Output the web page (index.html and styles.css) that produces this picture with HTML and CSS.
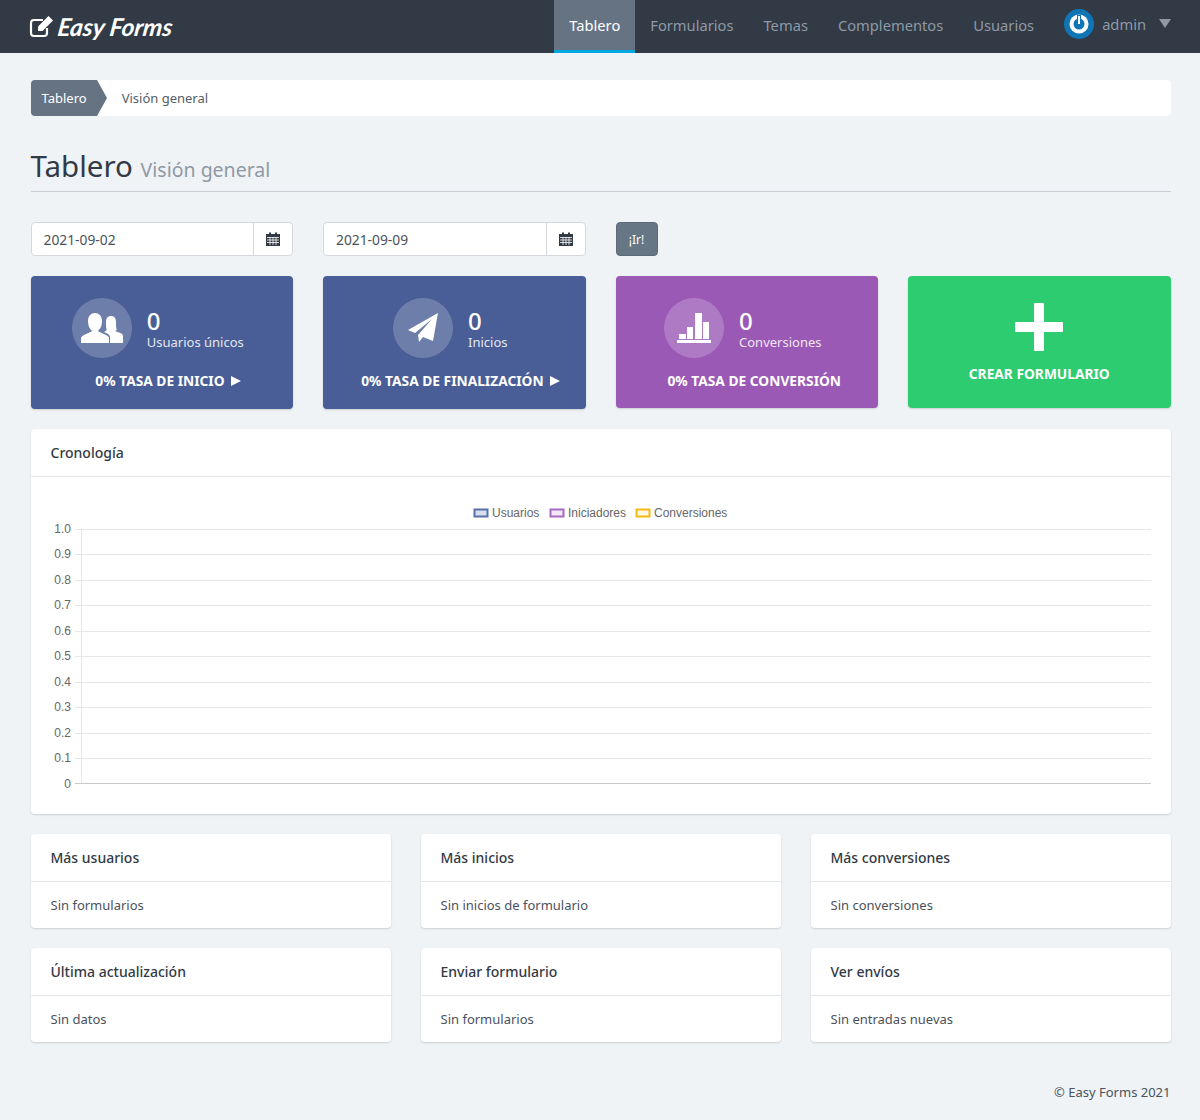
FILE: index.html
```html
<!DOCTYPE html>
<html lang="es">
<head>
  <meta charset="UTF-8">
  <title>Tablero - Easy Forms</title>
  <link rel="stylesheet" href="styles.css">
</head>
<body>

  <nav class="navbar">
    <a class="brand">
      <svg class="brand-icon" viewBox="0 0 24 24" width="24" height="24"><path d="M18 13v5a3 3 0 0 1-3 3H5a3 3 0 0 1-3-3V8a3 3 0 0 1 3-3h9" fill="none" stroke="#fff" stroke-width="2.2"/><path d="M9 11.5 19.5 1 24 5.5 13.500 16H9z" fill="#fff"/></svg>
      <span class="brand-text">Easy Forms</span>
    </a>
    <ul class="nav-links">
      <li class="active">Tablero</li>
      <li>Formularios</li>
      <li>Temas</li>
      <li>Complementos</li>
      <li>Usuarios</li>
      <li class="user">
        <svg class="avatar" viewBox="0 0 30 30" width="30" height="30"><circle cx="15" cy="15" r="15" fill="#0f75b5"/><circle cx="15" cy="15" r="9.500" fill="#fff"/><circle cx="15" cy="15" r="5.500" fill="#0f75b5"/><rect x="13" y="6" width="4" height="10" fill="#0f75b5"/><rect x="14" y="7" width="2" height="8" fill="#fff"/></svg>
        <span>admin</span>
        <i class="caret"></i>
      </li>
    </ul>
  </nav>

  <main class="page">
    <div class="breadcrumb">
      <span class="crumb-first">Tablero</span>
      <span class="crumb-current">Visión general</span>
    </div>

    <h1 class="page-title">Tablero <small>Visión general</small></h1>

    <div class="four-cols filters">
      <div class="input-group">
        <span class="date-value">2021-09-02</span>
        <span class="addon">
          <svg class="calendar" viewBox="0 0 14 14" width="14" height="14"><path d="M0 2h14v12H0z" fill="#323a45"/><rect x="3" y="0.500" width="2" height="3" fill="#323a45"/><rect x="9" y="0.500" width="2" height="3" fill="#323a45"/><path d="M1 5.500h12M1 8h12M1 10.500h12M4 5v8M7 5v8M10 5v8" stroke="#fff" stroke-width="0.800"/></svg>
        </span>
      </div>
      <div class="input-group">
        <span class="date-value">2021-09-09</span>
        <span class="addon">
          <svg class="calendar" viewBox="0 0 14 14" width="14" height="14"><path d="M0 2h14v12H0z" fill="#323a45"/><rect x="3" y="0.500" width="2" height="3" fill="#323a45"/><rect x="9" y="0.500" width="2" height="3" fill="#323a45"/><path d="M1 5.500h12M1 8h12M1 10.500h12M4 5v8M7 5v8M10 5v8" stroke="#fff" stroke-width="0.800"/></svg>
        </span>
      </div>
      <div><button class="go-button">¡Ir!</button></div>
    </div>

    <div class="four-cols stats">
      <div class="stat stat-blue">
        <div class="stat-main">
          <span class="stat-icon">
            <svg viewBox="0 0 42 30" width="42" height="30"><path d="M0 30v-5c0-3 9-5 11-7-3-3-4-6-4-10 0-5 3-8 7-8s7 3 7 8c0 4-1 7-4 10 2 2 11 4 11 7v5z" fill="#fff"/><path d="M29 30v-6c0-2-3-4-6-5 1-1 2-1 3-2-1-1-1-4-1-8 0-4 2-6 5-6s5 2 5 6c0 4 0 7 1 8l-2 1c2 1 8 2 8 5v7z" fill="#fff"/></svg>
          </span>
          <div class="stat-text"><b>0</b><span>Usuarios únicos</span></div>
        </div>
        <div class="stat-foot">0% TASA DE INICIO <i class="arrow"></i></div>
      </div>
      <div class="stat stat-blue">
        <div class="stat-main">
          <span class="stat-icon">
            <svg viewBox="0 0 30 30" width="30" height="30"><path d="M30 0 25 28 15 24 11 29 10 22 24 6 7 20 0 17z" fill="#fff"/></svg>
          </span>
          <div class="stat-text"><b>0</b><span>Inicios</span></div>
        </div>
        <div class="stat-foot">0% TASA DE FINALIZACIÓN <i class="arrow"></i></div>
      </div>
      <div class="stat stat-purple">
        <div class="stat-main">
          <span class="stat-icon">
            <svg viewBox="0 0 34 30" width="34" height="30"><path d="M0 27h34v3H0z" fill="#fff"/><path d="M2 21h7v5H2zM10 14h6v12h-6zM18 0h7v26h-7zM26 9h6v17h-6z" fill="#fff"/></svg>
          </span>
          <div class="stat-text"><b>0</b><span>Conversiones</span></div>
        </div>
        <div class="stat-foot no-arrow">0% TASA DE CONVERSIÓN</div>
      </div>
      <div class="stat stat-green">
        <span class="plus"></span>
        <div class="create-label">CREAR FORMULARIO</div>
      </div>
    </div>

    <section class="panel timeline">
      <h3 class="panel-head">Cronología</h3>
      <svg class="chart" viewBox="0 0 1140 337" width="1140" height="337">
        <g class="legend">
          <rect x="443.500" y="32.500" width="13" height="7" fill="#d8deee" stroke="#5870ab" stroke-width="2"/>
          <text x="461" y="40">Usuarios</text>
          <rect x="519.500" y="32.500" width="13" height="7" fill="#f2e8f6" stroke="#a868c4" stroke-width="2"/>
          <text x="537" y="40">Iniciadores</text>
          <rect x="605.500" y="32.500" width="13" height="7" fill="#fff8e4" stroke="#f5b914" stroke-width="2"/>
          <text x="623" y="40">Conversiones</text>
        </g>
        <g class="grid">
          <path d="M44 52.500H1120M44 77.500H1120M44 103.500H1120M44 128.500H1120M44 154.500H1120M44 179.500H1120M44 205.500H1120M44 230.500H1120M44 256.500H1120M44 281.500H1120"/>
          <path d="M50.500 52V307"/>
        </g>
        <path class="axis" d="M44 306.500H1120"/>
        <g class="ticks">
          <text x="40" y="56">1.0</text>
          <text x="40" y="81">0.9</text>
          <text x="40" y="107">0.8</text>
          <text x="40" y="132">0.7</text>
          <text x="40" y="158">0.6</text>
          <text x="40" y="183">0.5</text>
          <text x="40" y="209">0.4</text>
          <text x="40" y="234">0.3</text>
          <text x="40" y="260">0.2</text>
          <text x="40" y="285">0.1</text>
          <text x="40" y="311">0</text>
        </g>
      </svg>
    </section>

    <div class="three-cols">
      <section class="panel"><h3 class="panel-head">Más usuarios</h3><p class="panel-body">Sin formularios</p></section>
      <section class="panel"><h3 class="panel-head">Más inicios</h3><p class="panel-body">Sin inicios de formulario</p></section>
      <section class="panel"><h3 class="panel-head">Más conversiones</h3><p class="panel-body">Sin conversiones</p></section>
      <section class="panel"><h3 class="panel-head">Última actualización</h3><p class="panel-body">Sin datos</p></section>
      <section class="panel"><h3 class="panel-head">Enviar formulario</h3><p class="panel-body">Sin formularios</p></section>
      <section class="panel"><h3 class="panel-head">Ver envíos</h3><p class="panel-body">Sin entradas nuevas</p></section>
    </div>

    <footer class="copyright">© Easy Forms 2021</footer>
  </main>

</body>
</html>
```

FILE: styles.css
```css
* { box-sizing: border-box; margin: 0; padding: 0; }

body {
  font-family: "Noto Sans", "Open Sans", sans-serif;
  font-size: 13px;
  color: #323a45;
  background-color: #eff3f6;
}

.navbar {
  display: flex;
  justify-content: space-between;
  height: 53px;
  padding: 0 14px 0 29px;
  background-color: #323a45;
}

.brand {
  display: flex;
  align-items: center;
  gap: 5px;
  color: #fff;
}

.brand-text {
  font-family: "Lato", sans-serif;
  font-size: 24.5px;
  font-weight: 700;
  font-style: italic;
  transform: skewX(-8deg);
}

.nav-links {
  display: flex;
  list-style: none;
}

.nav-links li {
  display: flex;
  align-items: center;
  padding: 0 15px 4px;
  font-size: 14.7px;
  color: #8f99a5;
}

.nav-links .active {
  color: #fff;
  background-color: #657383;
  border-bottom: 3px solid #00a8e1;
  padding-bottom: 1px;
}

.nav-links .user { gap: 8px; padding-bottom: 6px; }

.caret {
  margin-left: 5px;
  border-left: 6px solid transparent;
  border-right: 6px solid transparent;
  border-top: 9px solid #8f99a5;
}

.page {
  width: 1140px;
  margin-left: 30.5px;
  padding-top: 27px;
}

.breadcrumb {
  display: flex;
  align-items: center;
  height: 36px;
  background: #fff;
  border-radius: 4px;
}

.crumb-first {
  position: relative;
  display: flex;
  align-items: center;
  height: 36px;
  padding: 0 10px 0 11px;
  color: #fff;
  background: #657383;
  border-radius: 4px 0 0 4px;
}

.crumb-first::after {
  content: "";
  position: absolute;
  left: 100%;
  top: 0;
  border-left: 10px solid #657383;
  border-top: 18px solid transparent;
  border-bottom: 18px solid transparent;
}

.crumb-current {
  margin-left: 25px;
  color: #555d68;
}

.page-title {
  margin-top: 29px;
  height: 47px;
  font-size: 29.5px;
  font-weight: 400;
  line-height: 41px;
  border-bottom: 1px solid #c9ced4;
}

.page-title small {
  font-size: 19.5px;
  color: #8f99a5;
}

.four-cols {
  display: grid;
  grid-template-columns: repeat(4, 1fr);
  gap: 30px;
}

.filters { margin-top: 30px; }

.input-group {
  display: flex;
  height: 34px;
  background: #fff;
  border: 1px solid #d5d9de;
  border-radius: 4px;
}

.date-value {
  flex: 1;
  padding: 0 12px;
  font-size: 13.8px;
  line-height: 34px;
  color: #4b525c;
}

.addon {
  display: flex;
  align-items: center;
  justify-content: center;
  width: 39px;
  border-left: 1px solid #d5d9de;
}

.go-button {
  width: 42px;
  height: 34px;
  font-family: inherit;
  font-size: 12px;
  color: #fff;
  background: #667685;
  border: 1px solid #5b6a78;
  border-radius: 4px;
}

.stats { margin-top: 20px; }

.stat {
  height: 132px;
  padding-top: 22px;
  color: #fff;
  border-radius: 4px;
  box-shadow: 0 1px 2px rgba(0,0,0,0.15);
}

.stat-blue { background-color: #495e96; height: 133px; }
.stat-purple { background-color: #9b59b6; }
.stat-green { background-color: #2ecc71; }

.stat-main {
  display: flex;
  justify-content: center;
  gap: 15px;
  padding-right: 8px;
}

.stat-icon {
  display: flex;
  align-items: center;
  justify-content: center;
  width: 60px;
  height: 60px;
  background: rgba(255,255,255,0.2);
  border-radius: 50%;
}

.stat-text {
  display: flex;
  flex-direction: column;
  padding-top: 8px;
}

.stat-text b {
  font-size: 24px;
  font-weight: 500;
  line-height: 30px;
}

.stat-text span {
  font-size: 13px;
  line-height: 13px;
  opacity: 0.85;
}

.stat-foot {
  margin-top: 13px;
  padding-left: 13px;
  font-size: 13.75px;
  font-weight: 700;
  line-height: 20px;
  text-align: center;
}

.stat-foot.no-arrow { padding-left: 15px; }

.arrow {
  display: inline-block;
  margin-left: 3px;
  vertical-align: 0;
  border-left: 10px solid #fff;
  border-top: 5px solid transparent;
  border-bottom: 5px solid transparent;
}

.plus {
  position: relative;
  display: block;
  width: 48px;
  height: 48px;
  margin: 5px auto 0;
}

.plus::before,
.plus::after {
  content: "";
  position: absolute;
  background: #fff;
  border-radius: 1px;
}

.plus::before { left: 19px; top: 0; width: 10px; height: 48px; }
.plus::after { left: 0; top: 19px; width: 48px; height: 10px; }

.create-label {
  margin-top: 13px;
  font-size: 13.75px;
  font-weight: 700;
  text-align: center;
}

.panel {
  background: #fff;
  border-radius: 4px;
  box-shadow: 0 1px 2px rgba(0,0,0,0.15);
}

.timeline {
  height: 385px;
  margin-top: 20px;
}

.panel-head {
  height: 48px;
  padding: 0 20px;
  font-size: 14px;
  font-weight: 500;
  line-height: 47px;
  border-bottom: 1px solid #e4e7ea;
}

.panel-body {
  height: 46px;
  padding: 0 20px;
  line-height: 47px;
  color: #4b525c;
}

.chart { display: block; }

.chart text {
  font-family: "Liberation Sans", sans-serif;
  font-size: 12px;
  fill: #666;
}

.ticks text { text-anchor: end; }
.grid path { fill: none; stroke: #e6e6e6; stroke-width: 1; }
.axis { fill: none; stroke: #c8c8c8; stroke-width: 1; }

.three-cols {
  display: grid;
  grid-template-columns: repeat(3, 1fr);
  gap: 20px 30px;
  margin-top: 20px;
}

.copyright {
  margin-top: 41px;
  padding-bottom: 19px;
  line-height: 18px;
  text-align: right;
  color: #4b525c;
}
```
